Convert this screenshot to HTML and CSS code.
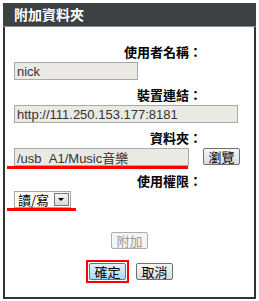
FILE: index.html
```html
<!doctype html>
<html lang="zh-Hant">
	<head>
		<meta charset="UTF-8" />
		<title>附加資料夾</title>
		<link rel="stylesheet" href="styles.css">
	</head>
	<body>
		<div class="dialog">
			<div class="dialog-title">附加資料夾</div>
			<div class="dialog-body">
				<div class="field-label">使用者名稱：</div>
				<div class="field-row">
					<input class="text-box box-user" type="text" value="nick" readonly>
				</div>

				<div class="field-label">裝置連結：</div>
				<div class="field-row">
					<input class="text-box box-url" type="text" value="http://111.250.153.177:8181" readonly>
				</div>

				<div class="field-label">資料夾：</div>
				<div class="field-row marked">
					<input class="text-box box-folder" type="text" value="/usb_A1/Music音樂" readonly>
					<button class="btn btn-browse" type="button">瀏覽</button>
				</div>

				<div class="field-label">使用權限：</div>
				<div class="field-row marked marked-short">
					<div class="select-box">
						<span class="select-value">讀/寫</span>
						<span class="select-arrow"></span>
					</div>
				</div>

				<div class="action-row">
					<button class="btn btn-add" type="button" disabled>附加</button>
				</div>

				<div class="action-row footer">
					<span class="focus-ring">
						<button class="btn btn-ok" type="button">確定</button>
					</span>
					<button class="btn" type="button">取消</button>
				</div>
			</div>
		</div>
	</body>
</html>
```

FILE: styles.css
```css
body {
	margin: 0;
	background: #fff;
	font-family: 'Liberation Sans', 'Noto Sans CJK TC', sans-serif;
	color: #000;
}
.dialog {
	box-sizing: border-box;
	width: 253px;
	height: 296px;
	margin: 3px 0 0 3px;
	border: 2px solid #333;
	border-top: none;
}
.dialog-title {
	height: 23px;
	margin: 0 -2px;
	padding-left: 11px;
	background-color: #3c4244;
	border-bottom: 1px solid #8b8f8f;
	color: #fff;
	font-family: 'Noto Sans CJK TC', sans-serif;
	font-weight: bold;
	font-size: 14px;
	line-height: 23px;
}
.dialog-body {
	padding: 16px 0 0 9px;
}
.field-label {
	padding-right: 52px;
	text-align: right;
	font-family: 'Noto Sans CJK TC', sans-serif;
	font-weight: bold;
	font-size: 13px;
	line-height: 18px;
	margin-bottom: 1px;
}
.field-row {
	display: flex;
	align-items: flex-start;
	gap: 14px;
	margin-bottom: 6px;
}
.marked {
	position: relative;
}
.marked::after {
	content: '';
	position: absolute;
	left: -7px;
	top: 18px;
	width: 181px;
	height: 3px;
	background-color: #f00;
}
.marked-short::after {
	top: 17px;
	width: 69px;
}
.text-box {
	box-sizing: border-box;
	height: 18px;
	margin: 0;
	padding: 0 2px;
	border: 1px solid #a9a9a9;
	background-color: #ebe9e3;
	color: #333;
	font-family: 'Liberation Sans', 'Noto Sans CJK TC', sans-serif;
	font-size: 13px;
}
.box-user {
	width: 124px;
}
.box-url {
	width: 224px;
}
.box-folder {
	width: 175px;
}
.btn {
	box-sizing: border-box;
	width: 37px;
	height: 17px;
	padding: 0;
	border: 1px solid #707070;
	border-radius: 2px;
	background: linear-gradient(#f6f6f6, #dcdcdc);
	font-family: 'Noto Sans CJK TC', sans-serif;
	font-size: 13px;
	line-height: 14px;
	color: #000;
}
.btn-add {
	color: #9a9a9a;
	border-color: #adadad;
	background: #f4f4f4;
}
.focus-ring {
	display: flex;
	margin: -3px 0;
	padding: 1px;
	border: 2px solid #f00;
}
.btn-ok {
	background: linear-gradient(#e3f3fc, #a9daf5);
	border-color: #3c7fb1;
}
.select-box {
	box-sizing: border-box;
	display: flex;
	align-items: center;
	gap: 5px;
	height: 17px;
	padding: 0 1px 0 3px;
	border: 1px solid #a5a5a5;
	background-color: #fff;
	font-family: 'Noto Sans CJK TC', sans-serif;
	font-size: 13px;
	white-space: nowrap;
}
.select-arrow {
	box-sizing: border-box;
	width: 15px;
	height: 13px;
	border: 1px solid #777;
	background: linear-gradient(#f4f4f4, #d8d8d8);
	position: relative;
}
.select-arrow::after {
	content: '';
	position: absolute;
	left: 3px;
	top: 4px;
	border-left: 3px solid transparent;
	border-right: 3px solid transparent;
	border-top: 3px solid #000;
}
.action-row {
	display: flex;
	justify-content: center;
	align-items: center;
	gap: 7px;
	padding-right: 9px;
	margin-top: 24px;
}
.footer {
	margin-top: 14px;
}
```
